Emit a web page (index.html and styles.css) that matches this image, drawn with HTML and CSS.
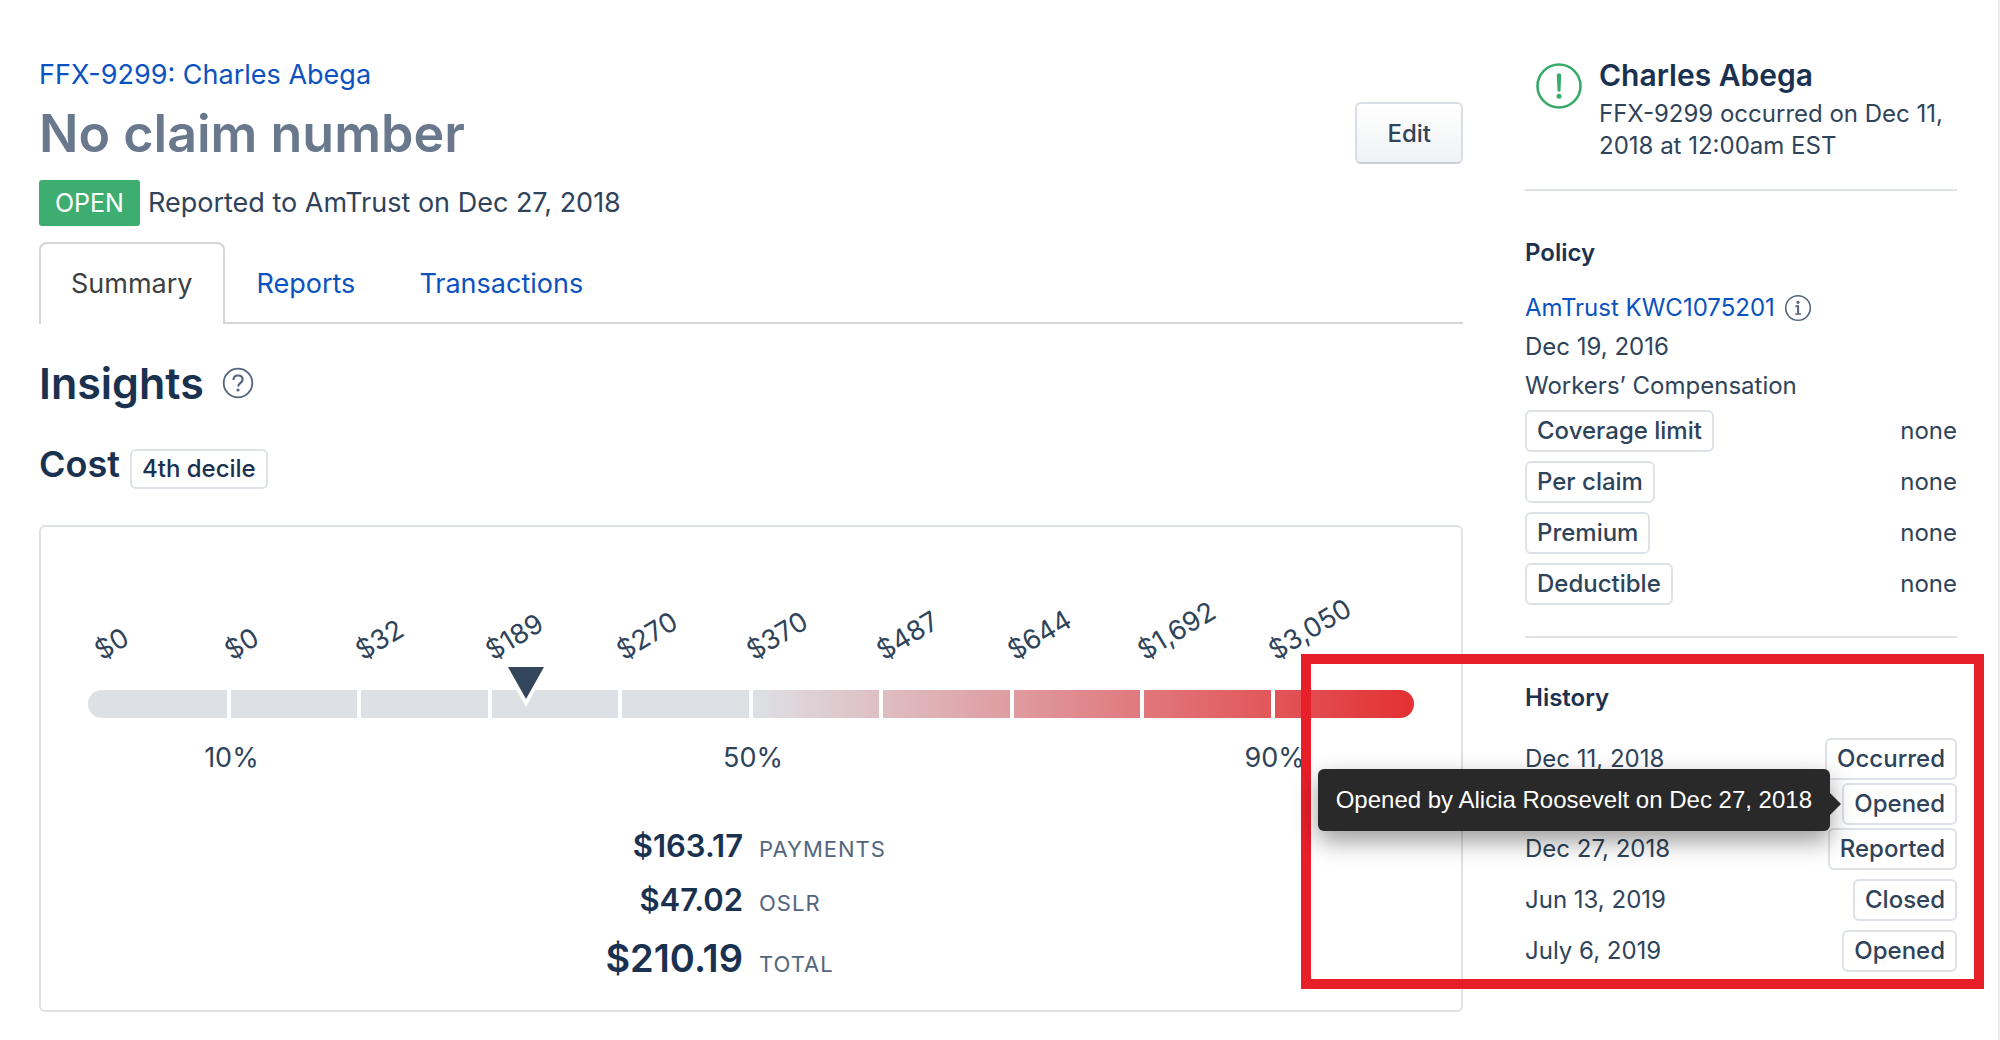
FILE: index.html
```html
<!DOCTYPE html>
<html lang="en">
<head>
  <meta charset="UTF-8">
  <meta name="viewport" content="width=device-width, initial-scale=1.0">
  <title>FFX-9299: Charles Abega</title>
  <link rel="stylesheet" href="styles.css">
</head>
<body>
  <div class="page">
    <main>
      <a class="breadcrumb" href="#">FFX-9299: Charles Abega</a>
      <div class="title-row">
        <h1>No claim number</h1>
        <button type="button" class="btn-edit">Edit</button>
      </div>
      <div class="status">
        <span class="badge">OPEN</span>
        <span>Reported to AmTrust on Dec 27, 2018</span>
      </div>

      <nav class="tabs">
        <a class="tab active" href="#">Summary</a>
        <a class="tab" href="#">Reports</a>
        <a class="tab" href="#">Transactions</a>
      </nav>

      <div class="insights">
        <h2>Insights</h2>
        <svg viewBox="0 0 32 32" width="32" height="32" fill="none" stroke="#53667c" stroke-width="1.8">
          <circle cx="16" cy="16" r="14.3"/>
          <path d="M11.5 13c0-2.8 1.9-4.5 4.6-4.5s4.5 1.6 4.5 4c0 3.5-4.5 3.6-4.5 7" stroke-width="2.2"/>
          <circle cx="16" cy="23" r="1.6" fill="#53667c" stroke="none"/>
        </svg>
      </div>

      <div class="cost">
        <h3>Cost</h3>
        <span class="pill pill-dark">4th decile</span>
      </div>

      <section class="card">
        <div class="chart">
          <div class="amounts">
            <span>$0</span>
            <span>$0</span>
            <span>$32</span>
            <span>$189</span>
            <span>$270</span>
            <span>$370</span>
            <span>$487</span>
            <span>$644</span>
            <span>$1,692</span>
            <span>$3,050</span>
          </div>
          <div class="bar">
            <i></i><i></i><i></i><i></i><i></i><i></i><i></i><i></i><i></i><i></i>
            <svg class="marker" viewBox="0 0 46 40" width="46" height="40">
              <path d="M1 0h44L23 40z" fill="#fff"/>
              <path d="M5 0h36L23 32z" fill="#34465c"/>
            </svg>
          </div>
          <div class="percents">
            <span class="p10">10%</span>
            <span class="p50">50%</span>
            <span class="p90">90%</span>
          </div>
        </div>

        <dl class="totals">
          <dd>$163.17</dd>
          <dt>PAYMENTS</dt>
          <dd>$47.02</dd>
          <dt>OSLR</dt>
          <dd class="total">$210.19</dd>
          <dt>TOTAL</dt>
        </dl>
      </section>
    </main>

    <aside>
      <header class="person">
        <svg viewBox="0 0 48 48" width="48" height="48" fill="none" stroke="#37ab69" stroke-width="2.6">
          <circle cx="24" cy="24" r="21.5"/>
          <path d="M21.8 13c0-1 .9-1.500 2.200-1.500s2.200.5 2.200 1.500l-.7 15.500c0 .8-.7 1.200-1.500 1.200s-1.500-.4-1.500-1.200z" fill="#37ab69" stroke="none"/>
          <circle cx="24" cy="34.200" r="2.500" fill="#37ab69" stroke="none"/>
        </svg>
        <div>
          <h2>Charles Abega</h2>
          <p>FFX-9299 occurred on Dec 11, 2018 at 12:00am EST</p>
        </div>
      </header>

      <section class="policy">
        <h4>Policy</h4>
        <p class="policy-link">
          <a href="#">AmTrust KWC1075201</a>
          <svg viewBox="0 0 28 28" width="28" height="28" fill="none" stroke="#53667c" stroke-width="1.6">
            <circle cx="14" cy="14" r="12.300"/>
            <circle cx="14" cy="8.300" r="1.600" fill="#53667c" stroke="none"/>
            <path d="M11.500 12.300h2.600v7.500" stroke-width="2"/>
            <path d="M11.300 20h5.600"/>
          </svg>
        </p>
        <p>Dec 19, 2016</p>
        <p>Workers’ Compensation</p>
        <ul class="rows">
          <li><span class="pill">Coverage limit</span> none</li>
          <li><span class="pill">Per claim</span> none</li>
          <li><span class="pill">Premium</span> none</li>
          <li><span class="pill">Deductible</span> none</li>
        </ul>
      </section>

      <section class="history">
        <h4>History</h4>
        <ul class="rows">
          <li>Dec 11, 2018 <span class="pill">Occurred</span></li>
          <li class="hovered">
            <span class="pill">Opened</span>
            <div class="tooltip" role="tooltip">Opened by Alicia Roosevelt on Dec 27, 2018</div>
          </li>
          <li>Dec 27, 2018 <span class="pill">Reported</span></li>
          <li>Jun 13, 2019 <span class="pill">Closed</span></li>
          <li>July 6, 2019 <span class="pill">Opened</span></li>
        </ul>
        <div class="highlight"></div>
      </section>
    </aside>
  </div>
</body>
</html>
```
FILE: styles.css
```css
* {
  box-sizing: border-box;
  margin: 0;
  padding: 0;
}

body {
  background: #fff;
  color: #2f435a;
  font-family: Inter, "Liberation Sans", sans-serif;
  font-size: 24px;
  line-height: 32px;
}

a {
  color: #0b52c1;
  text-decoration: none;
}

h1, h2, h3, h4 {
  color: #1a3150;
  font-weight: 600;
}

ul {
  list-style: none;
}

svg {
  display: block;
  flex: none;
}

.page {
  display: grid;
  grid-template-columns: minmax(0, 1fr) 432px;
  gap: 62px;
  min-height: 100vh;
  padding: 59px 41px 24px 39px;
  border-right: 2px solid #e9eeee;
}

/* header */
.breadcrumb {
  display: block;
  font-size: 27px;
}

.title-row {
  display: flex;
  justify-content: space-between;
  align-items: flex-start;
  margin-top: 11px;
}

h1 {
  font-size: 52px;
  line-height: 64px;
  color: #69788c;
}

.btn-edit {
  height: 62px;
  padding: 0 30px;
  border: 2px solid #d9dee4;
  border-bottom-color: #c9cfd7;
  border-radius: 6px;
  background: linear-gradient(#fff, #f0f2f3);
  color: #2f435a;
  font-family: inherit;
  font-size: 24px;
  font-weight: 500;
}

.status {
  display: flex;
  align-items: center;
  gap: 8px;
  margin-top: 14px;
  font-size: 27px;
}

.badge {
  padding: 0 16px;
  border-radius: 3px;
  background: #3dae6f;
  color: #fff;
  font-size: 25px;
  line-height: 46px;
}

.tabs {
  display: flex;
  margin-top: 16px;
  border-bottom: 2px solid #d3d5d7;
  font-size: 27px;
}

.tab {
  padding: 24px 30px 22px;
  border: 2px solid transparent;
  border-bottom: 0;
}

.tab.active {
  margin-bottom: -2px;
  border-color: #d3d5d7;
  border-radius: 8px 8px 0 0;
  background: #fff;
  color: #3d3f42;
}

/* insights */
.insights {
  display: flex;
  align-items: center;
  gap: 18px;
  margin-top: 31px;
}

.insights h2 {
  font-size: 43px;
  line-height: 56px;
}

.cost {
  display: flex;
  align-items: baseline;
  gap: 10px;
  margin-top: 33px;
}

.cost h3 {
  font-size: 36px;
  line-height: 40px;
}

.pill {
  padding: 0 10px;
  border: 2px solid #dde2e8;
  border-radius: 6px;
  background: #fff;
  font-weight: 500;
  line-height: 38px;
}

.pill-dark {
  color: #1a3150;
  line-height: 36px;
}

.card {
  margin-top: 36px;
  padding: 110px 47px 28px;
  border: 2px solid #dde2e8;
  border-radius: 6px;
}

.amounts,
.percents {
  display: grid;
  grid-template-columns: repeat(10, 1fr);
  font-size: 27px;
}

.amounts {
  padding: 0 13px 0 9px;
}

.amounts span {
  width: 0;
  transform: rotate(-31deg);
  transform-origin: left center;
}

.bar {
  position: relative;
  display: flex;
  height: 28px;
  margin-top: 21px;
  border-radius: 14px;
  background: linear-gradient(to right, #dde1e6 50%, #e33033);
}

.bar i {
  box-sizing: content-box;
  flex: 1 1 0;
  border-right: 4px solid #fff;
}

.bar i:first-child {
  padding-left: 12px;
}

.bar i:nth-child(10) {
  padding-right: 13px;
  border: 0;
}

.marker {
  position: absolute;
  left: 33%;
  top: -23px;
  transform: translateX(-50%);
}

.percents {
  margin-top: 24px;
  padding: 0 9px 0 13px;
}

.percents span {
  grid-row: 1;
  text-align: center;
}

.p10 { grid-column: 1 / 3; }
.p50 { grid-column: 5 / 7; }
.p90 { grid-column: 9 / 11; }

.totals {
  display: grid;
  grid-template-columns: 1fr 1fr;
  align-items: baseline;
  gap: 14px 16px;
  margin-top: 52px;
}

.totals dd {
  color: #1a3150;
  font-size: 31px;
  font-weight: 600;
  line-height: 40px;
  text-align: right;
}

.totals dd.total {
  font-size: 38px;
  line-height: 48px;
}

.totals dt {
  color: #53667c;
  font-size: 22px;
  letter-spacing: 1px;
}

/* sidebar */
.person {
  display: flex;
  gap: 16px;
  padding: 0 0 27px 10px;
  border-bottom: 2px solid #dde2e8;
}

.person svg {
  margin-top: 3px;
}

.person h2 {
  font-size: 30px;
}

.person p {
  margin-top: 7px;
}

.policy {
  padding: 46px 0 22px;
  border-bottom: 2px solid #dde2e8;
}

.policy p {
  line-height: 39px;
}

.policy .policy-link {
  display: flex;
  align-items: center;
  gap: 9px;
  margin-top: 19px;
}

.rows li {
  position: relative;
  display: flex;
  justify-content: space-between;
  align-items: center;
  margin-bottom: 9px;
}

.policy .rows {
  margin-top: 5px;
}

.history {
  position: relative;
  padding-top: 44px;
}

.history .rows {
  margin-top: 24px;
}

.history .pill {
  margin-left: auto;
}

.history .rows li:first-child,
.history .hovered {
  margin-bottom: 3px;
}

.tooltip {
  position: absolute;
  right: 127px;
  top: -14px;
  z-index: 2;
  padding: 0 18px;
  border-radius: 6px;
  background: #292929;
  box-shadow: 0 10px 24px rgba(0, 0, 0, 0.4);
  color: #fff;
  font-family: "Liberation Sans", Arial, sans-serif;
  line-height: 62px;
  white-space: nowrap;
}

.tooltip::after {
  content: "";
  position: absolute;
  left: 100%;
  top: 24px;
  border: 11px solid transparent;
  border-left-color: #292929;
  border-right: 0;
}

/* red frame around the history block */
.highlight {
  position: absolute;
  top: 16px;
  right: -27px;
  bottom: -17px;
  left: -224px;
  border: 10px solid #e71f29;
  pointer-events: none;
}
```
